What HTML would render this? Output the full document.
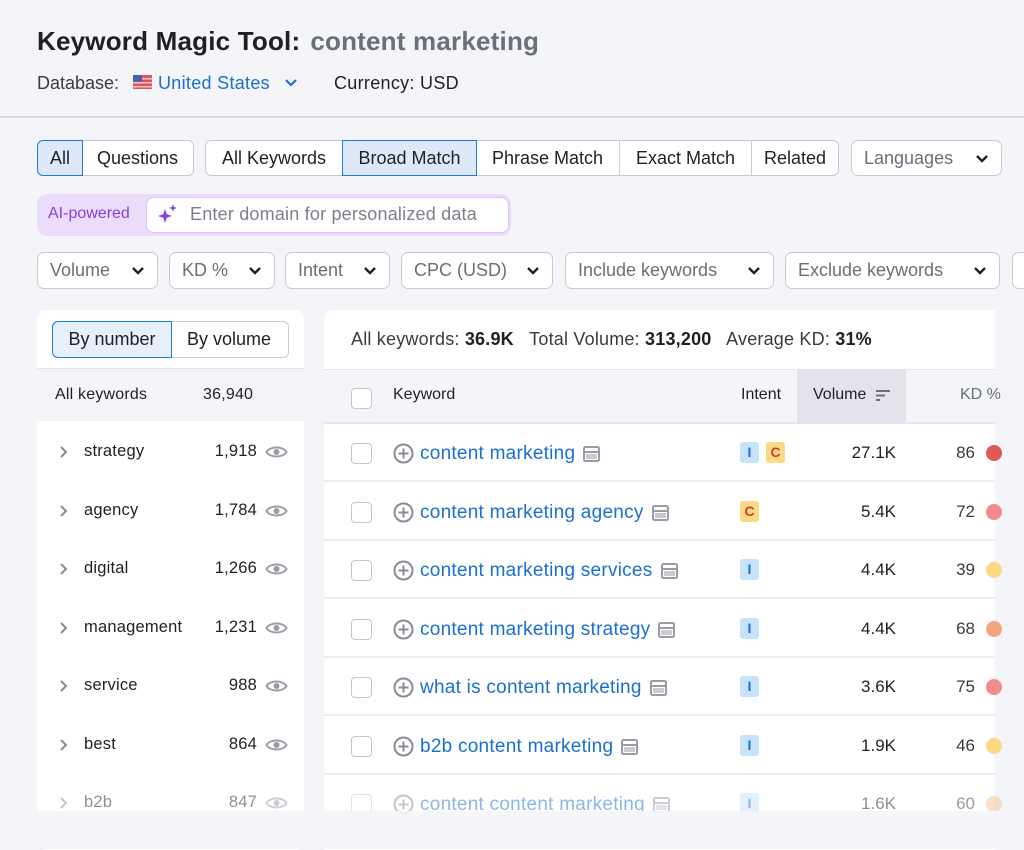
<!DOCTYPE html>
<html><head><meta charset="utf-8"><style>
*{box-sizing:border-box;margin:0;padding:0}
body{width:1024px;height:849px;overflow:hidden;background:#f4f5f9;font-family:"Liberation Sans",sans-serif;color:#1f2024;position:relative}
.a{position:absolute}
.btn{position:absolute;height:36px;border:1px solid #c9cbd3;background:#fff;display:flex;align-items:center;justify-content:center;font-size:18px;color:#1f2024}
.sel{background:#dde9f8;border:1.5px solid #1f7ae0;z-index:2}
.dd{position:absolute;top:252px;height:37px;border:1px solid #c9cbd3;border-radius:7px;background:#fff;font-size:18px;color:#6c6e79;display:flex;align-items:center;padding-left:12px}
.chev{position:absolute;right:12px;top:13px;width:14px;height:9px}
.row{position:absolute;left:324px;width:671px;height:58px;background:#fff;border-bottom:2px solid #ececf1}
.cb{position:absolute;left:27px;top:19px;width:21px;height:21px;border:1.5px solid #c4c6ce;border-radius:4px;background:#fff}
.pl{position:absolute;left:69px;top:19px}
.lk{position:absolute;left:96px;top:19px;font-size:19px;letter-spacing:.25px;color:#1a6fd0;white-space:nowrap;display:flex;align-items:center}
.bd{display:inline-block;width:19px;height:21px;border-radius:3px;font-size:14px;text-align:center;line-height:21px;font-weight:bold;position:absolute;top:18px}
.bi{background:#c7e3fb;color:#1a6fd0}
.bc{background:#fcd985;color:#d0402c}
.vol{position:absolute;right:99px;top:19px;font-size:17px}
.kd{position:absolute;right:20px;top:19px;font-size:17px;color:#3a3b41}
.dot{position:absolute;left:662px;top:21px;width:16px;height:16px;border-radius:50%}
</style></head><body>
<div class="a" style="left:37px;top:26px;font-size:26px;font-weight:bold;color:#1f2024;letter-spacing:.2px">Keyword Magic Tool:<span style="color:#6c6e79;margin-left:10px">content marketing</span></div>
<div class="a" style="left:37px;top:73px;font-size:18px;color:#3a3b41">Database:</div>
<svg class="a" style="left:133px;top:75px" width="19" height="14"><rect width="19" height="14" fill="#e0545c"/><rect y="3" width="19" height="1.5" fill="#f6c5c5"/><rect y="7" width="19" height="1.5" fill="#f6c5c5"/><rect y="11" width="19" height="1.5" fill="#f6c5c5"/><rect width="9" height="7" fill="#4a62a8"/></svg>
<div class="a" style="left:158px;top:73px;font-size:18px;color:#1a6fd0;letter-spacing:.3px">United States</div>
<svg class="a" style="left:284px;top:78px" width="14" height="9"><path d="M2 2l5 5 5-5" stroke="#1a6fd0" stroke-width="2.2" fill="none"/></svg>
<div class="a" style="left:334px;top:73px;font-size:18px;color:#1f2024;letter-spacing:.3px">Currency: USD</div>
<div class="a" style="left:0;top:116px;width:1024px;height:2px;background:#d6d8de"></div>

<div class="btn sel" style="left:37px;top:140px;width:46px;border-radius:6px 0 0 6px">All</div>
<div class="btn" style="left:82px;top:140px;width:112px;border-radius:0 6px 6px 0;border-left:none">Questions</div>
<div class="btn" style="left:205px;top:140px;width:138px;border-radius:6px 0 0 6px">All Keywords</div>
<div class="btn sel" style="left:342px;top:140px;width:135px">Broad Match</div>
<div class="btn" style="left:476px;top:140px;width:144px;border-left:none">Phrase Match</div>
<div class="btn" style="left:619px;top:140px;width:133px">Exact Match</div>
<div class="btn" style="left:751px;top:140px;width:88px;border-radius:0 6px 6px 0">Related</div>
<div class="dd" style="left:851px;top:140px;width:151px;height:36px">Languages<svg class="chev" viewBox="0 0 14 9"><path d="M2 2l5 5 5-5" stroke="#1f2024" stroke-width="2.4" fill="none"/></svg></div>

<div class="a" style="left:37px;top:194px;width:474px;height:42px;background:#ecdcfc;border-radius:10px"></div>
<div class="a" style="left:48px;top:205px;font-size:16px;color:#8a3ee0">AI-powered</div>
<div class="a" style="left:146px;top:197px;width:363px;height:36px;background:#fff;border:1.5px solid #dcc2fa;border-radius:8px"></div>
<svg class="a" style="left:157px;top:203px" width="22" height="22"><path d="M8 6 L9.8 11.2 L15 13 L9.8 14.8 L8 20 L6.2 14.8 L1 13 L6.2 11.2Z" fill="#8a3ee0"/><path d="M16 1 L17 4 L20 5 L17 6 L16 9 L15 6 L12 5 L15 4Z" fill="#8a3ee0"/></svg>
<div class="a" style="left:190px;top:204px;font-size:18px;color:#7d7f89;letter-spacing:.2px">Enter domain for personalized data</div>

<div class="dd" style="left:37px;width:121px">Volume<svg class="chev" viewBox="0 0 14 9"><path d="M2 2l5 5 5-5" stroke="#1f2024" stroke-width="2.4" fill="none"/></svg></div>
<div class="dd" style="left:169px;width:106px">KD %<svg class="chev" viewBox="0 0 14 9"><path d="M2 2l5 5 5-5" stroke="#1f2024" stroke-width="2.4" fill="none"/></svg></div>
<div class="dd" style="left:285px;width:105px">Intent<svg class="chev" viewBox="0 0 14 9"><path d="M2 2l5 5 5-5" stroke="#1f2024" stroke-width="2.4" fill="none"/></svg></div>
<div class="dd" style="left:401px;width:152px">CPC (USD)<svg class="chev" viewBox="0 0 14 9"><path d="M2 2l5 5 5-5" stroke="#1f2024" stroke-width="2.4" fill="none"/></svg></div>
<div class="dd" style="left:565px;width:209px">Include keywords<svg class="chev" viewBox="0 0 14 9"><path d="M2 2l5 5 5-5" stroke="#1f2024" stroke-width="2.4" fill="none"/></svg></div>
<div class="dd" style="left:785px;width:215px">Exclude keywords<svg class="chev" viewBox="0 0 14 9"><path d="M2 2l5 5 5-5" stroke="#1f2024" stroke-width="2.4" fill="none"/></svg></div>
<div class="dd" style="left:1012px;width:40px"></div>

<div class="a" style="left:37px;top:310px;width:267px;height:540px;background:#fff;border-radius:8px"></div>
<div class="btn sel" style="left:52px;top:321px;width:120px;height:37px;border-radius:6px 0 0 6px;background:#e6f0fb">By number</div>
<div class="btn" style="left:170px;top:321px;width:119px;height:37px;border-radius:0 6px 6px 0;border-left:none">By volume</div>
<div class="a" style="left:37px;top:368px;width:267px;height:53px;background:#f4f5f9;border-top:1px solid #e4e5ea"></div>
<div class="a" style="left:55px;top:386px;font-size:16px;letter-spacing:.2px">All keywords</div>
<div class="a" style="left:203px;top:386px;font-size:16px;letter-spacing:.2px">36,940</div>
<div id="left"></div>

<div class="a" style="left:995px;top:310px;width:29px;height:540px;background:#f4f5f9"></div>
<div class="a" style="left:324px;top:310px;width:671px;height:540px;background:#fff;border-radius:8px 0 0 0"></div>
<div class="a" style="left:351px;top:329px;font-size:18px;color:#3a3b41;letter-spacing:.2px">All keywords: <b style="color:#1f2024">36.9K</b>&nbsp;&nbsp; Total Volume: <b style="color:#1f2024">313,200</b>&nbsp;&nbsp; Average KD: <b style="color:#1f2024">31%</b></div>
<div class="a" style="left:324px;top:369px;width:671px;height:55px;background:#f4f5f9;border-top:1px solid #e4e5ea;border-bottom:2px solid #e4e5ea"></div>
<div class="a" style="left:797px;top:369px;width:109px;height:55px;background:#e3e4eb"></div>
<div class="a cb" style="left:351px;top:388px"></div>
<div class="a" style="left:393px;top:386px;font-size:16px">Keyword</div>
<div class="a" style="left:741px;top:386px;font-size:16px">Intent</div>
<div class="a" style="left:813px;top:386px;font-size:16px">Volume</div>
<svg class="a" style="left:875px;top:389px" width="16" height="13"><path d="M1 2h14M1 6.5h9M1 11h4" stroke="#6c6e79" stroke-width="2"/></svg>
<div class="a" style="left:960px;top:386px;font-size:16px;color:#6c6e79">KD %</div>
<div id="rows"></div>

<div class="a" style="left:0;top:811px;width:1024px;height:38px;background:linear-gradient(#f4f5f9f0,#f4f5f9)"></div>
<script>
var L=[["strategy","1,918"],["agency","1,784"],["digital","1,266"],["management","1,231"],["service","988"],["best","864"],["b2b","847"]];
var h="";L.forEach(function(r,i){var y=441+i*58.5;var o=i==6?"opacity:.5;":"";
h+='<div class="a" style="'+o+'left:37px;top:'+y+'px;width:267px;height:22px">'+
'<svg class="a" style="left:22px;top:4px" width="10" height="14"><path d="M2 2l5 5-5 5" stroke="#8a8c95" stroke-width="2" fill="none"/></svg>'+
'<div class="a" style="left:47px;top:1px;font-size:16.5px;letter-spacing:.2px">'+r[0]+'</div>'+
'<div class="a" style="right:47px;top:1px;font-size:16.5px;letter-spacing:.2px">'+r[1]+'</div>'+
'<svg class="a" style="left:228px;top:3px" width="23" height="16"><path d="M1.5 8C5 2 18 2 21.5 8C18 14 5 14 1.5 8Z" stroke="#9a9ca5" stroke-width="2" fill="none"/><circle cx="11.5" cy="8" r="3" fill="#9a9ca5"/></svg></div>';});
document.getElementById("left").innerHTML=h;
var R=[["content marketing",1,1,"27.1K","86","#dc5a5a"],["content marketing agency",0,1,"5.4K","72","#f28b8b"],["content marketing services",1,0,"4.4K","39","#fbd97e"],["content marketing strategy",1,0,"4.4K","68","#f2a57e"],["what is content marketing",1,0,"3.6K","75","#f28b8b"],["b2b content marketing",1,0,"1.9K","46","#fbd97e"],["content content marketing",1,0,"1.6K","60","#f0c28a"]];
h="";R.forEach(function(r,i){var y=424+i*58.5;var o=i==6?"opacity:.5;":"";
var b="";if(r[1]&&r[2]){b='<span class="bd bi" style="left:416px">I</span><span class="bd bc" style="left:442px">C</span>'}else if(r[1]){b='<span class="bd bi" style="left:416px">I</span>'}else{b='<span class="bd bc" style="left:416px">C</span>'}
h+='<div class="row" style="'+o+'top:'+y+'px"><div class="cb"></div>'+
'<svg class="pl" width="21" height="21"><circle cx="10.5" cy="10.5" r="9" stroke="#8a8c95" stroke-width="2" fill="none"/><path d="M10.5 5.5v10M5.5 10.5h10" stroke="#8a8c95" stroke-width="2"/></svg>'+
'<div class="lk">'+r[0]+
'<svg style="margin-left:8px" width="17" height="16"><rect x="1" y="1" width="15" height="14" rx="1.5" stroke="#9a9ca5" stroke-width="2" fill="none"/><path d="M1 6h15" stroke="#9a9ca5" stroke-width="2"/><rect x="3" y="8" width="11" height="5" fill="#c8cad1"/></svg></div>'+
b+'<div class="vol">'+r[3]+'</div><div class="kd">'+r[4]+'</div><div class="dot" style="background:'+r[5]+'"></div></div>';});
document.getElementById("rows").innerHTML=h;
</script>
</body></html>
